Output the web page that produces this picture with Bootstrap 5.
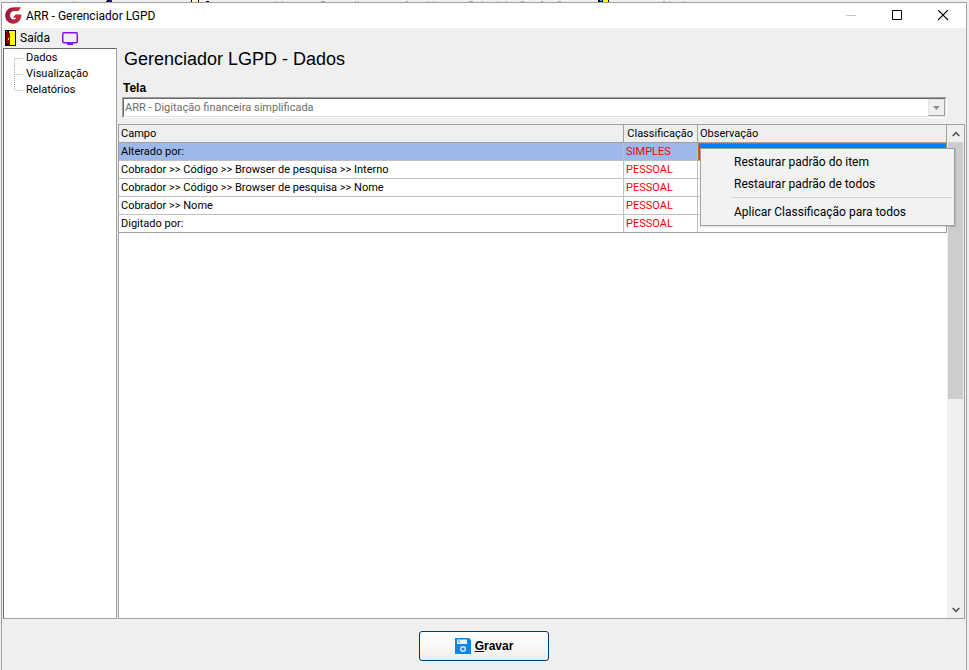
<!DOCTYPE html>
<html lang="pt-BR">
<head>
<meta charset="utf-8">
<meta name="viewport" content="width=device-width, initial-scale=1">
<title>ARR - Gerenciador LGPD</title>
<link href="https://cdn.jsdelivr.net/npm/bootstrap@5.3.0/dist/css/bootstrap.min.css" rel="stylesheet">
<style>
:root{--face:#efefef;--line:#a0a0a0;--cell:#c0c0c0}
body{background:var(--face);color:#000;font:12px/16px "Liberation Sans",Arial,sans-serif;overflow:hidden}
button{color:#000}
.backdrop-strip{height:2px;background:var(--face)}
.backdrop-strip svg{display:block;width:969px;height:2px}
.app-window{margin:0 2px 0 1px;border:1px solid var(--line);border-bottom:0;background:var(--face);min-height:0}
.ui-font{font-family:Roboto,"Open Sans",sans-serif;font-size:12px}
.title-bar{height:25px;background:#fff;padding-left:3px}
.win-title{font-size:12px;line-height:20px;font-weight:400}
.win-btn{width:46px;height:25px;border:0;background:none;padding:0;display:flex;align-items:center;justify-content:center}
.tool-bar{height:20px;padding-left:3px}
.tool-bar button{border:0;background:none;padding:0}
.work-area,.shrinkable{min-width:0;min-height:0}
.tree-pane{width:114px;margin-left:1px;background:#fff;border:1px solid var(--line);border-top-color:#696969;border-left-color:#696969;padding:1px 0 0 7px}
.tree-pane ul{margin:0;padding:0;list-style:none}
.tree-pane li{display:flex;height:16px}
.tree-pane svg{flex:none;width:12px;height:16px}
.tree-pane a{color:#000;text-decoration:none;line-height:16px;margin-left:3px;font:11px/16px Roboto,sans-serif}
.main-pane{margin:0 1px;min-width:0}
.main-head{padding:0 18px 6px 4px}
.page-title{font-size:18px;line-height:22px;margin:0;padding-left:2px;font-weight:400}
.field-label{font-size:12px;line-height:16px;font-weight:700;display:block;margin-top:10px;padding-left:1px}
.combo{height:21px;margin-top:1px;border:1px solid #fff;border-top-color:var(--line);border-left-color:var(--line);background:#fff}
.combo-in{border:1px solid #e3e3e3;border-top-color:#696969;border-left-color:#696969}
.combo select{appearance:none;border:0;background:#fff;color:#6d6d6d;opacity:1;padding:0 1px;font:11px/16px Roboto,sans-serif;min-width:0}
.combo button{width:17px;border:1px solid var(--line);border-top-color:#e3e3e3;border-left-color:#e3e3e3;background:var(--face);padding:0;display:flex;align-items:center;justify-content:center}
.grid-box{border:1px solid var(--line);background:#fff;min-height:0}
.data-grid{width:100%;table-layout:fixed;border-collapse:separate;border-spacing:0;font:11px/17px Roboto,sans-serif}
.data-grid th,.data-grid td{padding:0 2px;border-right:1px solid var(--cell);border-bottom:1px solid var(--cell);height:18px;white-space:nowrap}
.data-grid th{font-weight:400;background:var(--face);border-color:var(--line)}
.data-grid tr:last-child td{border-bottom-color:var(--line)}
.data-grid td:last-child{border-right-color:var(--line)}
.c-class{width:74px}
.c-obs{width:249px}
.data-grid td:nth-child(2){color:#f00}
.data-grid .picked td{background:#9db8eb}
.data-grid .picked td:last-child{background:#0a7bff;outline:1px dotted #d98200;outline-offset:-1px}
.scroll-col{width:17px;flex:none;background:var(--face);padding:0 1px}
.scroll-col button{height:17px;border:0;background:none;padding:0;display:flex;align-items:center;justify-content:center}
.scroll-track{background:var(--face)}
.scroll-thumb{height:56%;background:#cdcdcd}
.ctx-menu{position:absolute;top:23px;right:9px;width:255px;background:#f2f2f2;border:1px solid var(--line);padding:2px;box-shadow:1px 1px 1px rgba(0,0,0,.12);z-index:5}
.ctx-menu button{display:block;width:100%;height:22px;border:0;background:none;text-align:left;padding:0 0 0 31px;line-height:22px;white-space:nowrap}
.ctx-menu hr{margin:2px 0 3px 29px;border:0;border-top:1px solid #d0d0d0;opacity:1}
.foot-bar{padding:12px 0 9px}
.save-btn{width:130px;height:30px;border:1px solid #003c74;border-radius:3px;background:linear-gradient(#fff,#f8f7f5 60%,#efebe7);font-weight:700;font-size:12px;gap:4px;padding:0}
</style>
<script src="https://cdn.jsdelivr.net/npm/bootstrap@5.3.0/dist/js/bootstrap.bundle.min.js"></script>
</head>
<body class="vh-100 d-flex flex-column">
<div class="backdrop-strip" aria-hidden="true"><svg viewBox="0 0 969 2" shape-rendering="crispEdges"><path d="M18 1h1M73 1h1M276 1h1M282 1h1M321 1h4M355 1h1M358 1h1M406 1h2M427 1h1M433 1h1M469 1h4M482 1h1M497 1h1M506 1h1M521 1h3M541 1h2M558 1h3M663 1h2M669 1h1M683 1h1" stroke="#aaa" stroke-width="1"/><path d="M107 0h4v2h-5zM191 0h1v2h-1zM198 0h1v2h-1zM206 1h3v1h-3z" fill="#000"/><path d="M109 0h3v2h-3z" fill="#1a1a9a"/><path d="M193 0h5v2h-5z" fill="#fff8c0"/><path d="M598 0h11v2h-11z"/><path d="M603 0h5v2h-5z" fill="#ff0"/><path d="M600 0h2v1h-2z" fill="#0cc"/></svg></div>
<div class="app-window flex-grow-1 d-flex flex-column">
  <header class="title-bar d-flex align-items-center">
    <svg width="17" height="17" viewBox="0 0 17 17" aria-hidden="true"><defs><linearGradient id="logo" x2="1" y2="0"><stop stop-color="#8f1743"/><stop offset="1" stop-color="#d32c3c"/></linearGradient></defs><path d="M16 .3 13.500 4H9.500C6.500 4 5 5.800 5 8.300c0 2.600 1.500 4.200 3.500 4.200 1.500 0 2.300-.5 2.700-1.700H8L10.500 7.500H16.400c0 5.500-3.400 9.200-8.100 9.200C3.600 16.700.2 13 .2 8.700.2 3.700 4 .3 9 .3z" fill="url(#logo)"/></svg>
    <h1 class="win-title ui-font m-0 ms-1">ARR - Gerenciador LGPD</h1>
    <div class="d-flex ms-auto">
      <button class="win-btn" type="button" disabled aria-label="Minimizar"><svg width="11" height="11"><path d="M0 5.500h10" stroke="#c4c4c4"/></svg></button>
      <button class="win-btn" type="button" aria-label="Maximizar"><svg width="11" height="11"><path d="M.5.5h9v9h-9z" fill="none" stroke="#000"/></svg></button>
      <button class="win-btn" type="button" aria-label="Fechar"><svg width="11" height="11"><path d="M0 0l10 10M10 0l-10 10" stroke="#000" stroke-width="1.100"/></svg></button>
    </div>
  </header>
  <div class="tool-bar d-flex align-items-center ui-font">
    <button type="button" class="d-flex align-items-center gap-1"><svg width="11" height="16" viewBox="0 0 11 16" shape-rendering="crispEdges" aria-hidden="true"><path d="M0 0h11v16H0z"/><path d="M4 1h6v14H5V3H4z" fill="#ff0"/><path d="M1 1h1v1H1z" fill="#0ff"/><path d="M1 2h2v1h2v12H4v-1H2v-1H1z" fill="#900000"/><path d="M3 8h1v2H3z" fill="#ff0"/></svg><span>Saída</span></button>
    <button type="button" class="d-flex ms-2 ps-1" aria-label="Monitor"><svg width="16" height="13" viewBox="0 0 16 13"><rect x=".75" y=".75" width="14.500" height="10" rx="1" fill="none" stroke="#8a10ea" stroke-width="1.500"/><path d="M5 12h6" stroke="#8a10ea" stroke-width="2"/></svg></button>
  </div>
  <div class="work-area d-flex flex-grow-1">
    <nav class="tree-pane flex-shrink-0" aria-label="Seções">
      <ul>
        <li><svg><path d="M3.500 8.500V16M3.500 8.500H12" stroke="#aaa" stroke-dasharray="1 1" fill="none"/></svg><a href="#">Dados</a></li>
        <li><svg><path d="M3.500 0V16M3.500 8.500H12" stroke="#aaa" stroke-dasharray="1 1" fill="none"/></svg><a href="#">Visualização</a></li>
        <li><svg><path d="M3.500 0V8M3.500 8.500H12" stroke="#aaa" stroke-dasharray="1 1" fill="none"/></svg><a href="#">Relatórios</a></li>
      </ul>
    </nav>
    <main class="main-pane flex-grow-1 d-flex flex-column">
      <div class="main-head">
        <h2 class="page-title">Gerenciador LGPD - Dados</h2>
        <label class="field-label" for="tela">Tela</label>
        <div class="combo"><div class="combo-in d-flex h-100">
          <select id="tela" class="flex-grow-1" disabled><option>ARR - Digitação financeira simplificada</option></select>
          <button type="button" disabled aria-label="Abrir lista"><svg width="7" height="4"><path d="M0 0h7L3.500 4z" fill="#8c8c8c"/></svg></button>
        </div></div>
      </div>
      <div class="grid-box flex-grow-1 d-flex position-relative">
        <div class="shrinkable flex-grow-1">
          <table class="data-grid">
            <colgroup><col><col class="c-class"><col class="c-obs"></colgroup>
            <thead><tr><th scope="col">Campo</th><th scope="col" class="text-end pe-1">Classificação</th><th scope="col">Observação</th></tr></thead>
            <tbody>
              <tr class="picked"><td>Alterado por:</td><td>SIMPLES</td><td></td></tr>
              <tr><td>Cobrador &gt;&gt; Código &gt;&gt; Browser de pesquisa &gt;&gt; Interno</td><td>PESSOAL</td><td></td></tr>
              <tr><td>Cobrador &gt;&gt; Código &gt;&gt; Browser de pesquisa &gt;&gt; Nome</td><td>PESSOAL</td><td></td></tr>
              <tr><td>Cobrador &gt;&gt; Nome</td><td>PESSOAL</td><td></td></tr>
              <tr><td>Digitado por:</td><td>PESSOAL</td><td></td></tr>
            </tbody>
          </table>
        </div>
        <div class="scroll-col d-flex flex-column">
          <button type="button" aria-label="Rolar para cima"><svg width="8" height="6"><path d="M.7 5 4 1.700 7.300 5" fill="none" stroke="#555" stroke-width="1.700"/></svg></button>
          <div class="scroll-track flex-grow-1"><div class="scroll-thumb"></div></div>
          <button type="button" aria-label="Rolar para baixo"><svg width="8" height="6"><path d="M.7 1 4 4.300 7.300 1" fill="none" stroke="#555" stroke-width="1.700"/></svg></button>
        </div>
        <div class="ctx-menu ui-font" role="menu">
          <button type="button" role="menuitem">Restaurar padrão do item</button>
          <button type="button" role="menuitem">Restaurar padrão de todos</button>
          <hr>
          <button type="button" role="menuitem">Aplicar Classificação para todos</button>
        </div>
      </div>
    </main>
  </div>
  <footer class="foot-bar d-flex justify-content-center">
    <button type="button" class="save-btn d-flex align-items-center justify-content-center"><svg width="16" height="16" viewBox="0 0 16 16" aria-hidden="true"><path d="M0 0h14l2 2v14H0z" fill="#0c84e8"/><path d="M2 1.500h10v4.500H2z" fill="#e8f4ff"/><path d="M3 2h2v3H3z" fill="#8cc4f4"/><circle cx="8" cy="11" r="2.300" fill="#0c84e8" stroke="#d4ecff" stroke-width="1.400"/></svg><span><u>G</u>ravar</span></button>
  </footer>
</div>
</body>
</html>
